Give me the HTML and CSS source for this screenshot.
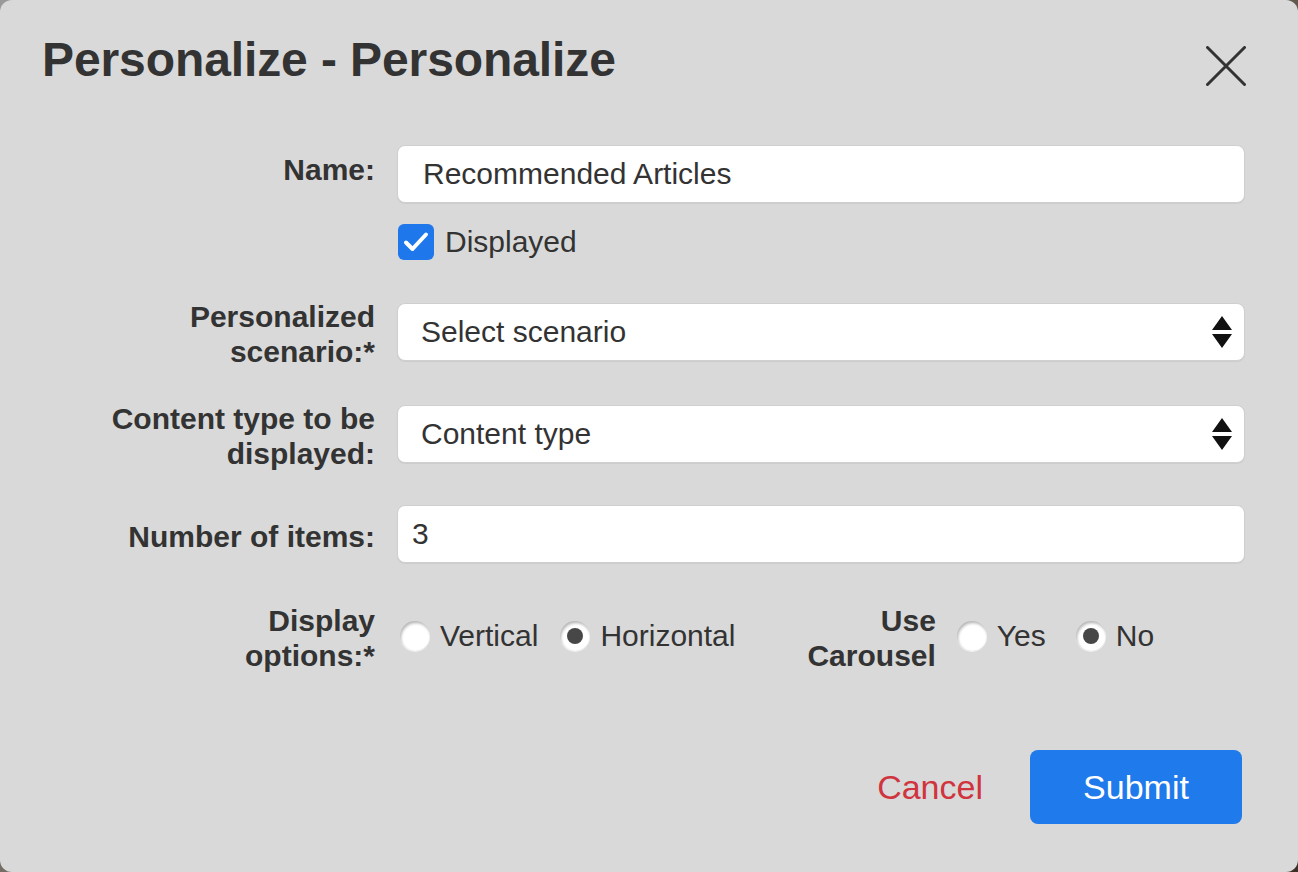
FILE: index.html
```html
<!DOCTYPE html>
<html lang="en">
<head>
<meta charset="utf-8">
<title>Personalize</title>
<link rel="stylesheet" href="styles.css">
</head>
<body>
<div class="dialog">
  <div class="header">
    <h1 class="title">Personalize - Personalize</h1>
    <button class="close" aria-label="Close">
      <svg width="40" height="40" viewBox="0 0 40 40"><path d="M1.5 1.5 L38.5 38.5 M38.5 1.5 L1.5 38.5" stroke="#333" stroke-width="3" stroke-linecap="round" fill="none"/></svg>
    </button>
  </div>

  <div class="form">
    <div class="row row-name">
      <div class="label label-name">Name:</div>
      <div class="control-stack">
        <input class="field field-name" type="text" value="Recommended Articles">
        <label class="check">
          <span class="checkbox">
            <svg width="36" height="36" viewBox="0 0 36 36"><path d="M8 18.5 L14.5 25 L28 10.5" stroke="#fff" stroke-width="4" stroke-linecap="round" stroke-linejoin="round" fill="none"/></svg>
          </span>
          <span class="check-text">Displayed</span>
        </label>
      </div>
    </div>

    <div class="row row-fixed">
      <div class="label">Personalized<br>scenario:*</div>
      <div class="field select">
        <span class="select-text">Select scenario</span>
        <svg class="arrows" width="20" height="32" viewBox="0 0 20 32"><path d="M10 0 L20 14 L0 14 Z M0 18 L20 18 L10 32 Z" fill="#111"/></svg>
      </div>
    </div>

    <div class="row row-fixed row-content">
      <div class="label">Content type to be<br>displayed:</div>
      <div class="field select">
        <span class="select-text">Content type</span>
        <svg class="arrows" width="20" height="32" viewBox="0 0 20 32"><path d="M10 0 L20 14 L0 14 Z M0 18 L20 18 L10 32 Z" fill="#111"/></svg>
      </div>
    </div>

    <div class="row row-fixed row-number">
      <div class="label">Number of items:</div>
      <input class="field field-number" type="text" value="3">
    </div>

    <div class="row row-fixed row-radios">
      <div class="label">Display<br>options:*</div>
      <div class="radios">
        <div class="radio-group group-display">
          <span class="radio-option"><span class="radio"></span><span class="radio-text">Vertical</span></span>
          <span class="radio-option"><span class="radio checked"></span><span class="radio-text">Horizontal</span></span>
        </div>
        <div class="label label-carousel">Use<br>Carousel</div>
        <div class="radio-group group-carousel">
          <span class="radio-option"><span class="radio"></span><span class="radio-text">Yes</span></span>
          <span class="radio-option"><span class="radio checked"></span><span class="radio-text">No</span></span>
        </div>
      </div>
    </div>
  </div>

  <div class="footer">
    <button class="btn-cancel">Cancel</button>
    <button class="btn-submit">Submit</button>
  </div>
</div>
</body>
</html>
```

FILE: styles.css
```css
html, body {
  margin: 0;
  padding: 0;
}

body {
  width: 1298px;
  height: 872px;
  overflow: hidden;
  background: linear-gradient(135deg, #9a9a9a 0%, #6a6258 50%, #3b3126 100%);
  font-family: "Liberation Sans", Arial, Helvetica, sans-serif;
  color: #333;
}

.dialog {
  box-sizing: border-box;
  width: 1298px;
  height: 872px;
  background: #d9d9d9;
  border-radius: 12px;
  padding: 32px 53px 0 42px;
  display: flex;
  flex-direction: column;
}

.header {
  display: flex;
  justify-content: space-between;
  align-items: flex-start;
}

.title {
  margin: 0;
  font-size: 48px;
  line-height: 56px;
  font-weight: bold;
  color: #333;
  letter-spacing: -0.1px;
}

.close {
  margin: 14px -1px 0 0;
  padding: 0;
  border: 0;
  background: none;
  width: 40px;
  height: 40px;
  display: block;
}

.close svg {
  display: block;
}

.form {
  margin-top: 57px;
  display: flex;
  flex-direction: column;
  gap: 43px;
}

.row {
  display: flex;
  gap: 22px;
  align-items: flex-start;
}

.row-fixed {
  height: 58px;
  align-items: center;
}

.row-content {
  margin-top: 1px;
}

.row-number {
  margin-top: -1px;
}

.label {
  width: 333px;
  flex: none;
  text-align: right;
  font-size: 30px;
  line-height: 35px;
  font-weight: bold;
  color: #333;
  position: relative;
  top: 2px;
}

.label-name {
  height: 48px;
  display: flex;
  align-items: center;
  justify-content: flex-end;
  top: 0;
}

.control-stack {
  flex: 1;
  display: flex;
  flex-direction: column;
  gap: 21px;
}

.field {
  box-sizing: border-box;
  height: 58px;
  width: 848px;
  flex: none;
  background: #fff;
  border: 1px solid #cfcfcf;
  border-radius: 8px;
  box-shadow: 0 1px 1px rgba(0, 0, 0, 0.06);
  font-family: "Liberation Sans", Arial, Helvetica, sans-serif;
  font-size: 30px;
  color: #333;
  outline: none;
  margin: 0;
}

.field-name {
  padding: 0 0 0 25px;
}

.field-number {
  padding: 0 0 0 14px;
}

.select {
  display: flex;
  align-items: center;
  justify-content: space-between;
  padding: 0 12px 0 23px;
}

.arrows {
  display: block;
}

.check {
  display: flex;
  align-items: center;
  gap: 11px;
  height: 36px;
  margin-left: 1px;
}

.checkbox {
  width: 36px;
  height: 36px;
  border-radius: 6px;
  background: #1e78ec;
  display: block;
}

.checkbox svg {
  display: block;
}

.check-text {
  font-size: 30px;
  color: #333;
}

.row-radios {
  margin-top: 1px;
}

.radios {
  display: flex;
  align-items: center;
  height: 70px;
}

.radio-group {
  display: flex;
  align-items: center;
}

.group-display {
  margin-left: 3px;
  gap: 22px;
}

.group-carousel {
  margin-left: 21px;
  gap: 30px;
}

.label-carousel {
  width: auto;
  margin-left: 72px;
}

.radio-option {
  display: flex;
  align-items: center;
  gap: 10px;
}

.radio {
  box-sizing: border-box;
  width: 30px;
  height: 30px;
  border-radius: 50%;
  background: radial-gradient(circle at 55% 60%, #ffffff 0%, #ffffff 55%, #f0f0f0 75%, #d2d2d2 100%);
  box-shadow: inset 1px 2px 3px rgba(0, 0, 0, 0.25), 0 1px 0 rgba(255, 255, 255, 0.6);
  position: relative;
  flex: none;
}

.radio.checked::after {
  content: "";
  position: absolute;
  left: 7px;
  top: 7px;
  width: 16px;
  height: 16px;
  border-radius: 50%;
  background: #474747;
}

.radio-text {
  font-size: 30px;
  color: #333;
}

.footer {
  margin-top: 85px;
  display: flex;
  justify-content: flex-end;
  align-items: center;
  gap: 47px;
  padding-right: 3px;
}

.btn-cancel {
  border: 0;
  background: none;
  padding: 0;
  font-family: "Liberation Sans", Arial, Helvetica, sans-serif;
  font-size: 34px;
  color: #d0343f;
}

.btn-submit {
  width: 212px;
  height: 74px;
  border: 0;
  border-radius: 8px;
  background: #1f7aeb;
  color: #fff;
  font-family: "Liberation Sans", Arial, Helvetica, sans-serif;
  font-size: 34px;
  padding: 0;
}
```
